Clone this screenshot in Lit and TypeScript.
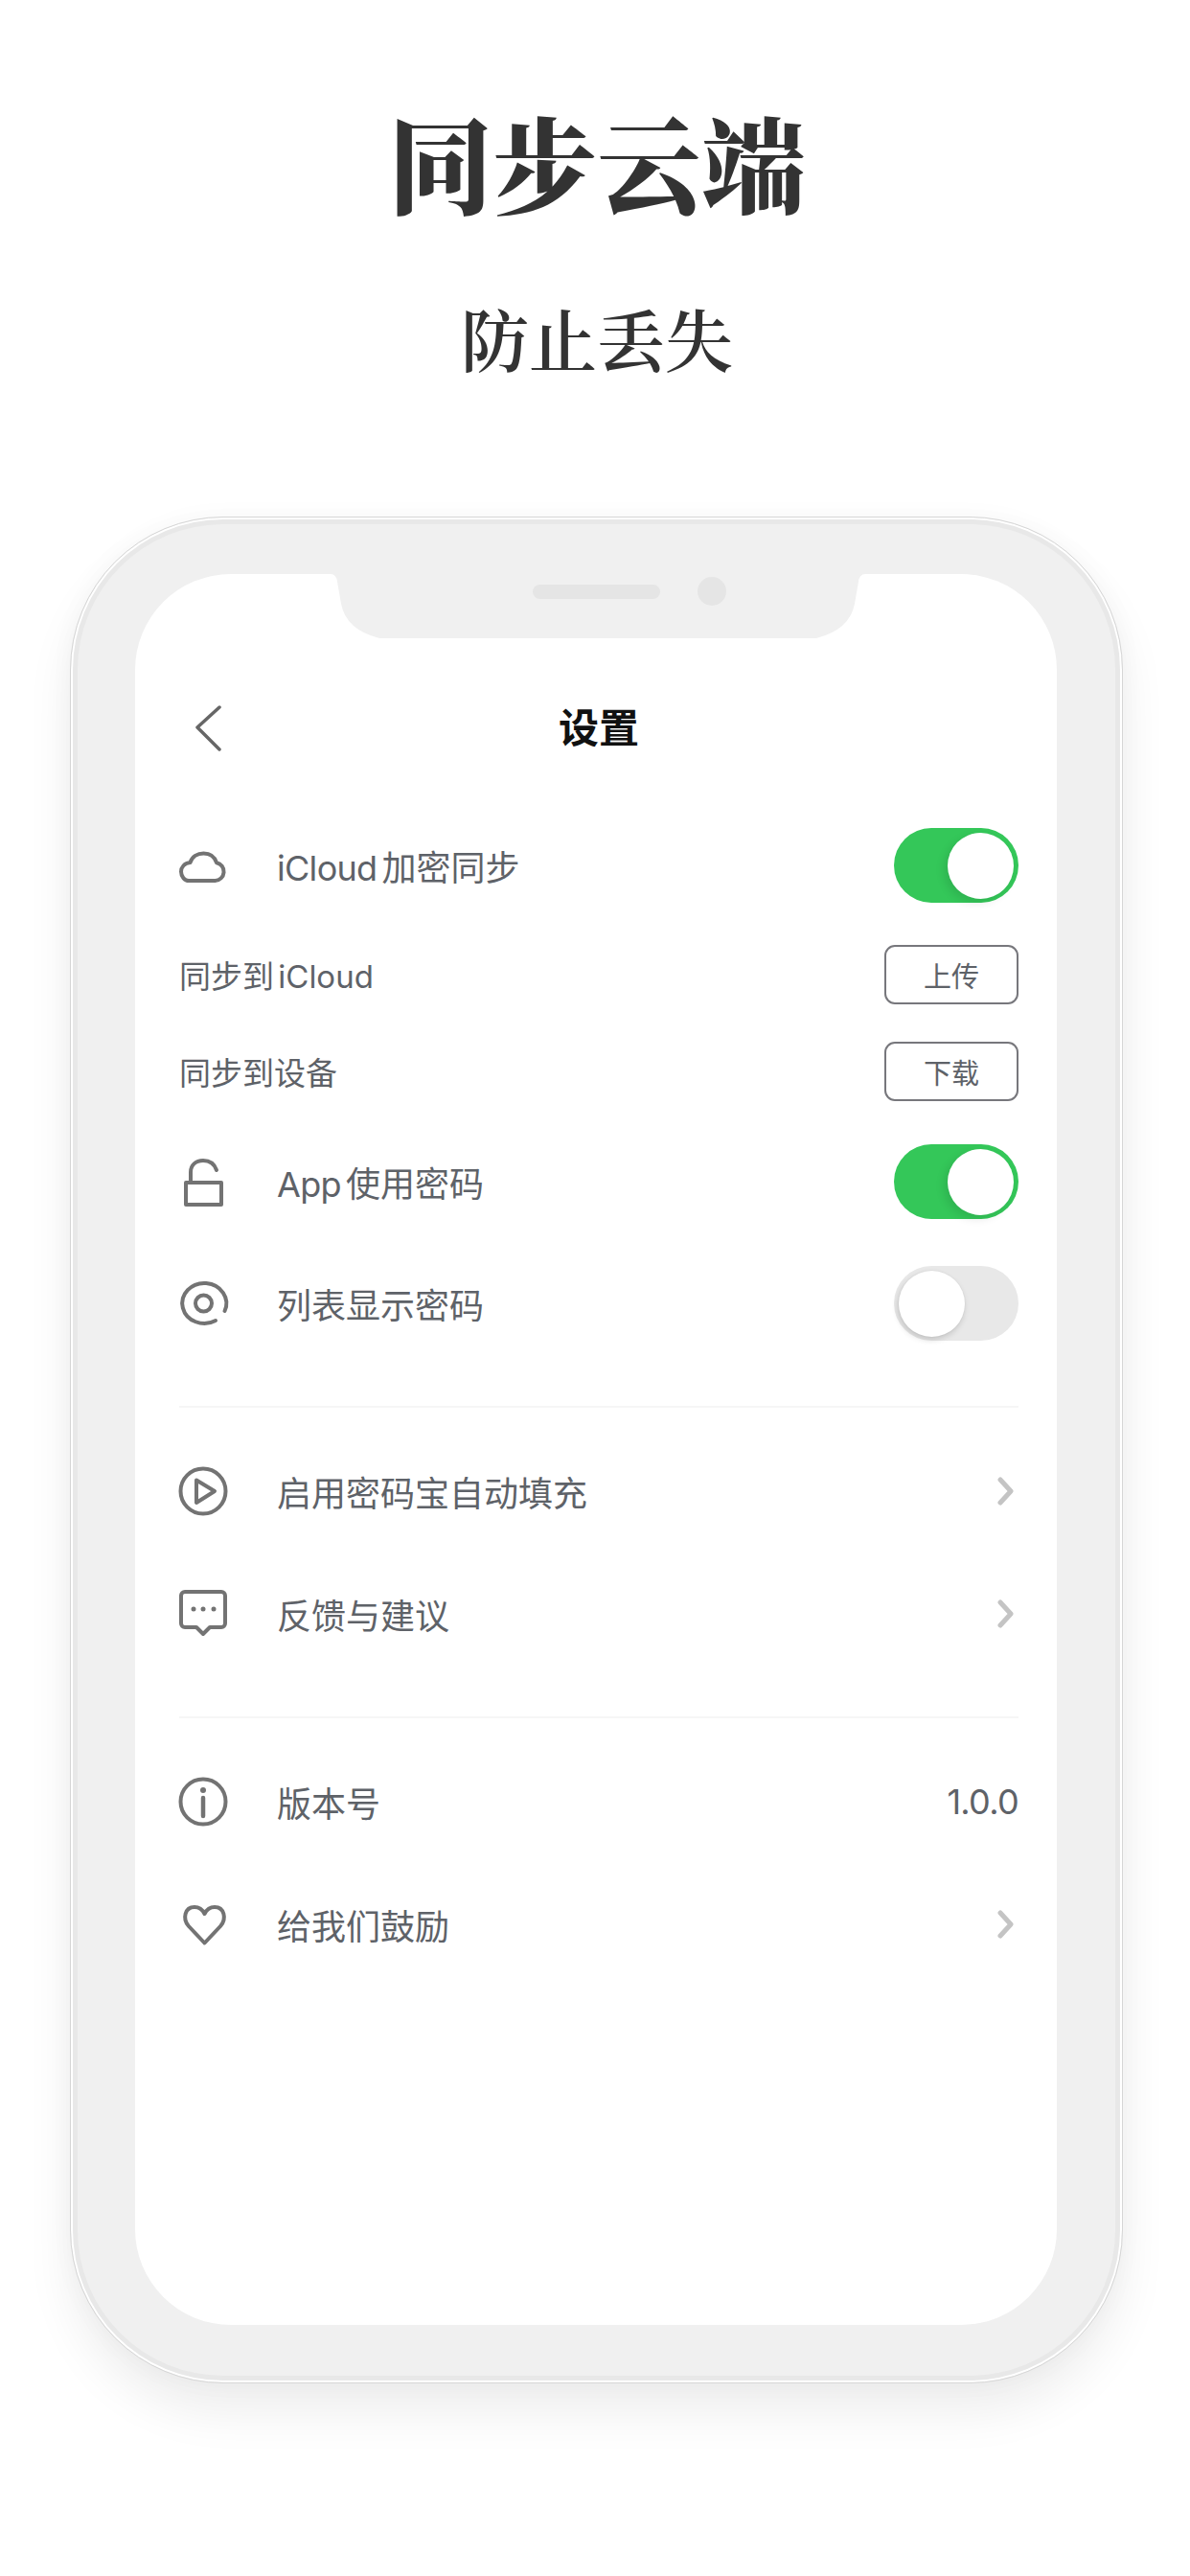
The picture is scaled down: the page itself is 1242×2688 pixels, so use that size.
import { LitElement, html, css, svg } from "lit";
import { customElement } from "lit/decorators.js";

const icons: Record<string, unknown> = {
  cloud: svg`<path d="M14 46H41.5a9.5 9.5 0 0 0 1.5-18.8C41 21 36 17.5 29.500 17.500 23 17.500 17.500 21 15.500 27 9.500 27.500 6 32 6 36.500 6 42 10 46 14 46z"/>`,
  lock: svg`<path d="M11 31H48V54H11z"/><path d="M16 31V20C16 13 21 8 29 8 36 8 41 12 43 18"/>`,
  at: svg`<path d="M42 48A23 21 0 1 1 51.500 38"/><circle cx="29.500" cy="30" r="8.500"/>`,
  play: svg`<circle cx="29" cy="30" r="23.500"/><path d="M22 18.500 41 30 22 42z"/>`,
  chat: svg`<path d="M10 7H48a4 4 0 0 1 4 4V40a4 4 0 0 1-4 4H36L29 51 22 44H10a4 4 0 0 1-4-4V11a4 4 0 0 1 4-4z"/><circle class="solid" cx="19" cy="25" r="2.500"/><circle class="solid" cx="29" cy="25" r="2.500"/><circle class="solid" cx="40" cy="25" r="2.500"/>`,
  info: svg`<circle cx="29" cy="30" r="23.500"/><circle class="solid" cx="29" cy="18" r="3"/><path stroke-width="4.500" d="M29 26V45"/>`,
  heart: svg`<path d="M30.500 49.500 14 32C7 24 10 12 20 12 25 12 28.500 15 30.500 19 32.500 15 36 12 41 12 51 12 54 24 47 32z"/>`,
};

const icon = (name: string) =>
  html`<svg class="icon" viewBox="0 0 60 60" width="60" height="60">${icons[name]}</svg>`;

const chevron = html`<svg class="chev" viewBox="0 0 22 34" width="22" height="34"><path d="M3 5 14 17 3 29"/></svg>`;

@customElement("app-root")
export class AppRoot extends LitElement {
  static styles = css`
    :host {
      display: block;
      width: 1242px;
      height: 2688px;
      overflow: hidden;
      background: #fff;
      font-family: Inter, "Noto Sans CJK SC", sans-serif;
      color: #5e6268;
    }
    .hero {
      display: flex;
      flex-direction: column;
      align-items: center;
      padding-left: 4px;
      color: #333;
      font-family: "Noto Serif CJK SC", "Noto Sans CJK SC", serif;
    }
    h1 {
      margin: 114px 0 0;
      font-size: 109px;
      line-height: 108px;
      font-weight: 900;
    }
    h2 {
      margin: 89px 0 0;
      font-size: 71px;
      line-height: 80px;
      font-weight: 600;
    }
    .phone {
      position: relative;
      box-sizing: border-box;
      width: 1099px;
      height: 1948px;
      margin: 148px 0 0 73px;
      padding: 59px 68px 60px 67px;
      border: 1px solid #d6d6d6;
      border-radius: 160px;
      background: #f0f0f0;
      box-shadow: inset 0 0 0 2px #fff, inset 0 0 0 7px #e8e8e8, 0 30px 50px rgba(0, 0, 0, 0.07),
        0 0 26px rgba(0, 0, 0, 0.03);
    }
    .screen {
      position: relative;
      box-sizing: border-box;
      height: 100%;
      padding: 120px 40px 0 46px;
      border-radius: 100px;
      background: #fff;
    }
    .notch {
      position: absolute;
      left: 204px;
      top: 0;
      width: 558px;
      height: 67px;
    }
    .notch svg {
      position: absolute;
      inset: 0;
      fill: #f0f0f0;
    }
    .sensors {
      position: relative;
      display: flex;
      align-items: center;
      gap: 39px;
      height: 36px;
      padding-left: 211px;
    }
    .speaker {
      width: 133px;
      height: 15px;
      border-radius: 8px;
      background: #e5e5e5;
    }
    .camera {
      width: 30px;
      height: 30px;
      border-radius: 50%;
      background: #e5e5e5;
    }
    .head {
      position: relative;
      box-sizing: border-box;
      display: flex;
      align-items: center;
      justify-content: center;
      height: 80px;
      padding-bottom: 6px;
      color: #111;
      font-size: 42px;
      font-weight: 700;
    }
    .back {
      position: absolute;
      left: 14px;
      top: 16px;
      fill: none;
      stroke: #666;
      stroke-width: 3.5;
      stroke-linecap: round;
      stroke-linejoin: round;
    }
    .row {
      display: flex;
      align-items: center;
      height: 78px;
      font-size: 36px;
      font-weight: 400;
      word-spacing: -5px;
    }
    .sub {
      height: 62px;
      font-size: 33px;
    }
    .lat {
      letter-spacing: -0.7px;
    }
    .icon {
      flex: none;
      margin: 0 46px 0 -4px;
      fill: none;
      stroke: #737373;
      stroke-width: 4;
      stroke-linejoin: round;
      stroke-linecap: round;
    }
    .icon .solid {
      fill: #737373;
      stroke: none;
    }
    .label {
      flex: 1;
      white-space: nowrap;
    }
    .chev {
      fill: none;
      stroke: #c4c4c4;
      stroke-width: 5;
      stroke-linejoin: round;
      stroke-linecap: round;
    }
    .btn {
      box-sizing: border-box;
      display: flex;
      align-items: center;
      justify-content: center;
      width: 140px;
      height: 62px;
      border: 2px solid #77777c;
      border-radius: 11px;
      font-size: 29px;
    }
    .toggle {
      position: relative;
      flex: none;
      width: 130px;
      height: 78px;
      border-radius: 39px;
      background: #e8e8e8;
    }
    .toggle.on {
      background: #34c759;
    }
    .knob {
      position: absolute;
      left: 5px;
      top: 5px;
      width: 69px;
      height: 69px;
      border-radius: 50%;
      background: #fff;
      box-shadow: -1px 3px 6px rgba(0, 0, 0, 0.16), 0 0 0 1px rgba(0, 0, 0, 0.02);
    }
    .on .knob {
      left: 56px;
      box-shadow: -4px 4px 10px rgba(0, 0, 0, 0.1);
    }
    .rule {
      height: 2px;
      margin-top: 68px;
      background: #f6f6f6;
    }
    .m65 { margin-top: 65px; }
    .m44 { margin-top: 44px; }
    .m39 { margin-top: 39px; }
    .m45 { margin-top: 45px; }
    .m49 { margin-top: 49px; }
    .m48 { margin-top: 48px; }
    .m50 { margin-top: 50px; }
  `;

  private toggle(on: boolean) {
    return html`<div class="toggle ${on ? "on" : ""}"><div class="knob"></div></div>`;
  }

  render() {
    return html`
      <div class="hero">
        <h1>同步云端</h1>
        <h2>防止丢失</h2>
      </div>
      <div class="phone">
        <div class="screen">
          <div class="notch">
            <svg viewBox="0 0 558 67" width="558" height="67">
              <path d="M0 0Q6 0 7 8L11 31Q16 58 51 67H507Q542 58 547 31L551 8Q552 0 558 0z" />
            </svg>
            <div class="sensors"><div class="speaker"></div><div class="camera"></div></div>
          </div>
          <div class="head">
            <svg class="back" viewBox="0 0 32 50" width="32" height="50"><path d="M28 3 5 24 28 47" /></svg>
            设置
          </div>
          <div class="row m65">${icon("cloud")}<span class="label"><span class="lat">iCloud</span> 加密同步</span>${this.toggle(true)}</div>
          <div class="row sub m44"><span class="label">同步到 iCloud</span><div class="btn">上传</div></div>
          <div class="row sub m39"><span class="label">同步到设备</span><div class="btn">下载</div></div>
          <div class="row m45">${icon("lock")}<span class="label"><span class="lat">App</span> 使用密码</span>${this.toggle(true)}</div>
          <div class="row m49">${icon("at")}<span class="label">列表显示密码</span>${this.toggle(false)}</div>
          <div class="rule"></div>
          <div class="row m48">${icon("play")}<span class="label">启用密码宝自动填充</span>${chevron}</div>
          <div class="row m50">${icon("chat")}<span class="label">反馈与建议</span>${chevron}</div>
          <div class="rule"></div>
          <div class="row m48">${icon("info")}<span class="label">版本号</span><span class="lat">1.0.0</span></div>
          <div class="row m50">${icon("heart")}<span class="label">给我们鼓励</span>${chevron}</div>
        </div>
      </div>
    `;
  }
}
